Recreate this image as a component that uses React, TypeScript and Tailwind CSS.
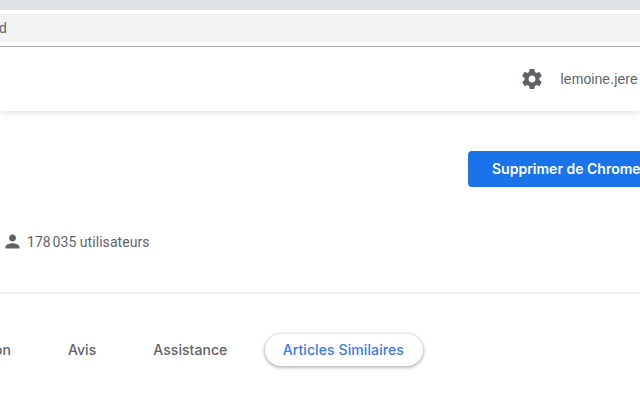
import React from 'react';

const Gear: React.FC = () => (
  <svg viewBox="0 0 24 24" className="h-6 w-6 fill-[#5f6368]">
    <path d="M19.43 12.98c.04-.32.07-.64.07-.98s-.03-.66-.07-.98l2.11-1.65c.19-.15.24-.42.12-.64l-2-3.46c-.12-.22-.39-.3-.61-.22l-2.49 1c-.52-.4-1.08-.73-1.69-.98l-.38-2.65C14.46 2.18 14.25 2 14 2h-4c-.25 0-.46.18-.49.42l-.38 2.65c-.61.25-1.17.59-1.69.98l-2.49-1c-.23-.09-.49 0-.61.22l-2 3.46c-.13.22-.07.49.12.64l2.11 1.65c-.04.32-.07.65-.07.98s.03.66.07.98l-2.11 1.65c-.19.15-.24.42-.12.64l2 3.46c.12.22.39.3.61.22l2.49-1c.52.4 1.08.73 1.69.98l.38 2.65c.03.24.24.42.49.42h4c.25 0 .46-.18.49-.42l.38-2.65c.61-.25 1.17-.59 1.69-.98l2.49 1c.23.09.49 0 .61-.22l2-3.46c.12-.22.07-.49-.12-.64l-2.11-1.65zM12 15.5c-1.93 0-3.5-1.57-3.5-3.5s1.57-3.5 3.5-3.5 3.5 1.57 3.5 3.5-1.57 3.5-3.5 3.5z" />
  </svg>
);

const Person: React.FC = () => (
  <svg viewBox="0 0 24 24" className="h-[21px] w-[21px] shrink-0 fill-[#5f6368]">
    <path d="M12 12c2.21 0 4-1.79 4-4s-1.79-4-4-4-4 1.79-4 4 1.79 4 4 4zm0 2c-2.67 0-8 1.34-8 4v2h16v-2c0-2.66-5.33-4-8-4z" />
  </svg>
);

const App: React.FC = () => {
  return (
    <div className="h-[406px] w-[640px] overflow-hidden bg-white font-['Roboto',sans-serif]">
      <div className="h-[10px] bg-[#dee1e6]" />
      <div className="h-[37px] border-b border-[#b3b3b3] bg-white pt-1">
        <div className="flex h-7 items-center overflow-hidden bg-[#f1f3f4] font-['Liberation_Sans',sans-serif] text-sm text-[#5f6368]">
          <span className="-ml-[1px]">d</span>
        </div>
      </div>

      <header className="relative flex h-[64px] items-center justify-end bg-white shadow-[0_2px_6px_rgba(60,64,67,0.15)]">
        <div className="flex items-center whitespace-nowrap pr-[2px]">
          <Gear />
          <span className="ml-[17px] font-['Liberation_Sans',sans-serif] text-sm tracking-[0.1px] text-[#5f6368]">lemoine.jere</span>
        </div>
      </header>

      <div className="flex h-[183px] flex-col border-b-2 border-[#f1f3f4]">
        <div className="flex justify-end pt-10">
          <button className="h-9 w-[172px] overflow-hidden whitespace-nowrap rounded-l bg-[#1a73e8] pl-6 text-left font-['Inter',sans-serif] text-sm font-semibold text-white">
            Supprimer de Chrome
          </button>
        </div>
        <div className="mt-[44px] flex items-center gap-[4.5px] pl-[1.5px] text-sm tracking-[0.05px] text-[#5f6368]">
          <Person />
          <span>178{'\u202f'}035 utilisateurs</span>
        </div>
      </div>

      <nav className="flex items-center pt-10 font-['Inter',sans-serif] text-sm font-medium tracking-[0.05px] text-[#5f6368]">
        <span className="-ml-[6px]">on</span>
        <span className="ml-[57px]">Avis</span>
        <span className="ml-[57px]">Assistance</span>
        <span className="ml-[38px] flex h-8 w-[158px] items-center justify-center rounded-full bg-white pr-[2px] tracking-[0.1px] text-[#3b78e7] shadow-[0_1px_3px_1px_rgba(60,64,67,0.35)]">
          Articles Similaires
        </span>
      </nav>
    </div>
  );
};

export default App;
